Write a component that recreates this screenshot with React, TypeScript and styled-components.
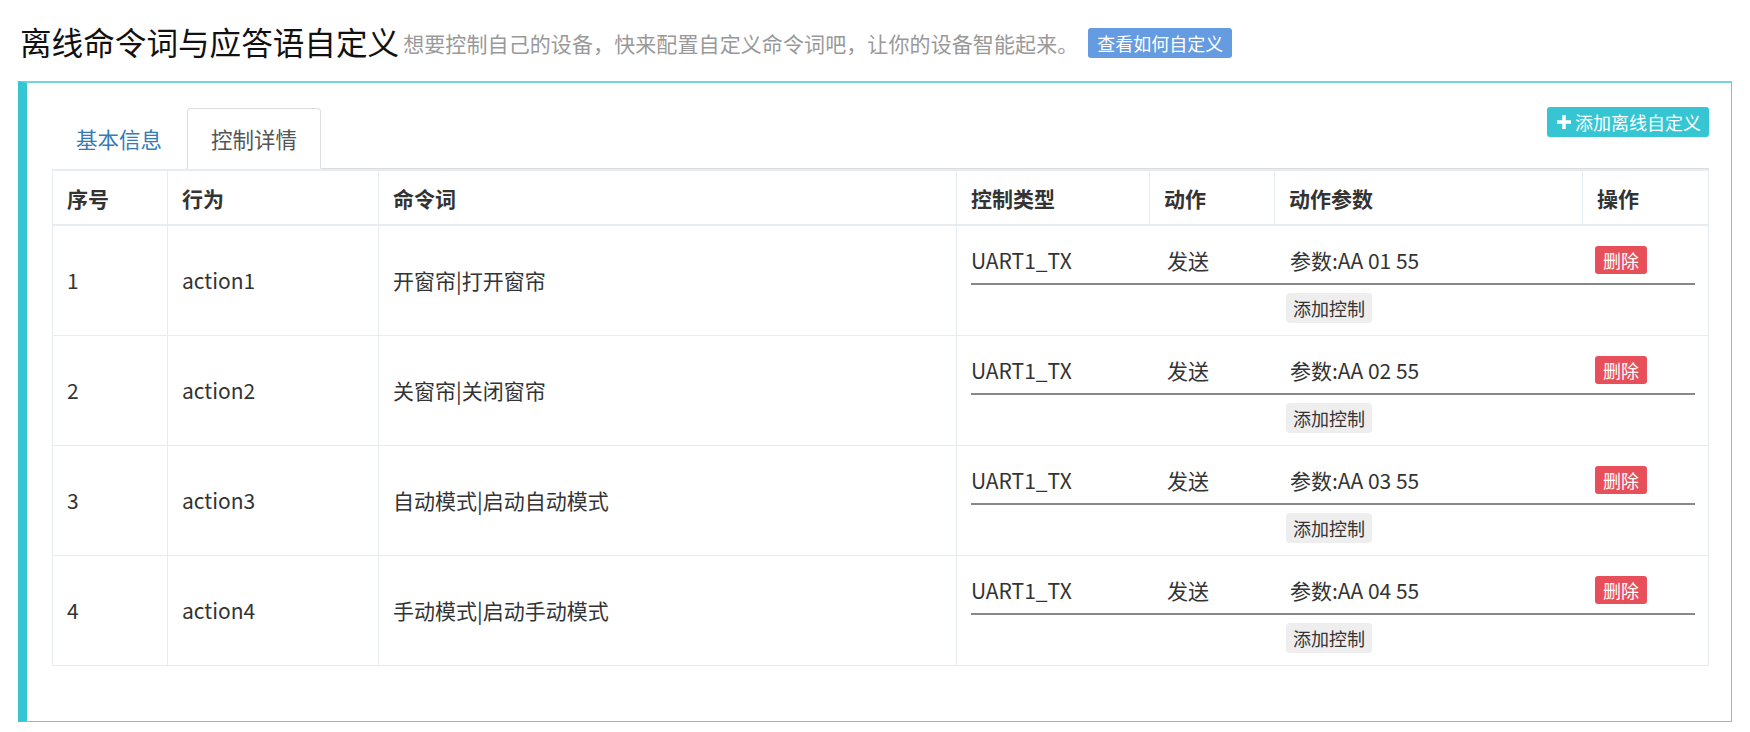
import React from 'react'
import styled, { createGlobalStyle } from 'styled-components'

const GlobalStyle = createGlobalStyle`
  html, body {
    margin: 0;
    padding: 0;
    background: #fff;
  }
  body {
    font-family: "Noto Sans CJK SC", "Noto Sans", sans-serif;
    color: #333;
  }
`

const ROWS = [
  { id: 1, action: 'action1', words: '开窗帘|打开窗帘', param: 'AA 01 55' },
  { id: 2, action: 'action2', words: '关窗帘|关闭窗帘', param: 'AA 02 55' },
  { id: 3, action: 'action3', words: '自动模式|启动自动模式', param: 'AA 03 55' },
  { id: 4, action: 'action4', words: '手动模式|启动手动模式', param: 'AA 04 55' },
]

const COLUMNS = [
  { title: '序号', width: 115 },
  { title: '行为', width: 211 },
  { title: '命令词', width: 578 },
  { title: '控制类型', width: 193 },
  { title: '动作', width: 125 },
  { title: '动作参数', width: 308 },
  { title: '操作', width: 126 },
]

const App = () => {
  return (
    <>
      <GlobalStyle />
      <Page>
        <TitleRow>
          <Title>离线命令词与应答语自定义</Title>
          <SubTitle>想要控制自己的设备，快来配置自定义命令词吧，让你的设备智能起来。</SubTitle>
          <HelpButton>查看如何自定义</HelpButton>
        </TitleRow>
        <Panel>
          <TabBar>
            <Tab>基本信息</Tab>
            <Tab active>控制详情</Tab>
            <AddButton>
              <PlusIcon viewBox="0 0 12 12">
                <path d="M4.5 0h3v4.5H12v3H7.5V12h-3V7.5H0v-3h4.5z" fill="#fff" />
              </PlusIcon>
              添加离线自定义
            </AddButton>
          </TabBar>
          <Table>
            <colgroup>
              {COLUMNS.map((c) => (
                <col key={c.title} style={{ width: c.width }} />
              ))}
            </colgroup>
            <thead>
              <tr>
                {COLUMNS.map((c) => (
                  <Th key={c.title}>{c.title}</Th>
                ))}
              </tr>
            </thead>
            <tbody>
              {ROWS.map((row) => (
                <tr key={row.id}>
                  <Td>{row.id}</Td>
                  <Td>{row.action}</Td>
                  <Td>{row.words}</Td>
                  <ControlCell colSpan={4}>
                    <ControlLine>
                      <span>UART1_TX</span>
                      <span>发送</span>
                      <span>参数:{row.param}</span>
                      <DeleteButton>删除</DeleteButton>
                    </ControlLine>
                    <AddControlRow>
                      <AddControlButton>添加控制</AddControlButton>
                    </AddControlRow>
                  </ControlCell>
                </tr>
              ))}
            </tbody>
          </Table>
        </Panel>
      </Page>
    </>
  )
}

export default App

const Page = styled.div`
  padding: 19px 18px 12px 18px;
`

const TitleRow = styled.div`
  display: flex;
  align-items: center;
  height: 44px;
  padding-left: 2px;
  margin-bottom: 18px;
`

const Title = styled.h1`
  margin: 0;
  font-size: 31.6px;
  font-weight: 400;
  color: #111;
`

const SubTitle = styled.span`
  margin-left: 4px;
  margin-top: 4px;
  font-size: 21px;
  color: #999;
  letter-spacing: 0.1px;
`

const HelpButton = styled.button`
  margin-left: 10px;
  margin-top: 4px;
  height: 30px;
  padding: 0 9px;
  border: none;
  border-radius: 3px;
  background: #659be0;
  color: #fff;
  font-family: inherit;
  font-size: 18px;
  line-height: 30px;
`

const Panel = styled.div`
  border: 1px solid #5dd0da;
  border-top: 2px solid #6fd5de;
  border-left: 9px solid #36c6d3;
  padding: 24px 22px 55px 25px;
`

const TabBar = styled.div`
  display: flex;
  align-items: flex-end;
  height: 61px;
  border-bottom: 1px solid #ddd;
`

const Tab = styled.div<{ active?: boolean }>`
  height: 61px;
  box-sizing: border-box;
  padding: 0 23px;
  margin-bottom: -1px;
  display: flex;
  align-items: center;
  font-size: 21.5px;
  color: ${({ active }) => (active ? '#555' : '#337ab7')};
  background: #fff;
  border: 1px solid ${({ active }) => (active ? '#ddd' : 'transparent')};
  border-bottom-color: ${({ active }) => (active ? '#fff' : 'transparent')};
  border-radius: 4px 4px 0 0;
  margin-right: 1px;
`

const AddButton = styled.button`
  margin-left: auto;
  align-self: flex-start;
  display: flex;
  align-items: center;
  gap: 4px;
  height: 30px;
  padding: 0 8px 0 10px;
  border: none;
  border-radius: 3px;
  background: #36c6d3;
  color: #fff;
  font-family: inherit;
  font-size: 18px;
`

const PlusIcon = styled.svg`
  width: 14px;
  height: 14px;
`

const Table = styled.table`
  width: 100%;
  table-layout: fixed;
  border-collapse: collapse;
  border: 1px solid #e7ecf1;
  border-top: none;
`

const Th = styled.th`
  height: 53px;
  padding: 0 14px;
  text-align: left;
  font-size: 21px;
  font-weight: 700;
  color: #333;
  border: 1px solid #e7ecf1;
  border-top: 2px solid #e7ecf1;
  border-bottom: 2px solid #e7ecf1;
`

const Td = styled.td`
  height: 110px;
  box-sizing: border-box;
  padding: 0 14px;
  font-size: 21px;
  color: #333;
  border: 1px solid #e7ecf1;
  vertical-align: middle;
`

const ControlCell = styled(Td)`
  padding: 0 13px 0 14px;
`

const ControlLine = styled.div`
  display: grid;
  grid-template-columns: 196px 123px 305px 1fr;
  align-items: center;
  height: 45px;
  border-bottom: 2px solid #888;
`

const DeleteButton = styled.button`
  justify-self: start;
  height: 28px;
  padding: 0 8px;
  border: none;
  border-radius: 3px;
  background: #e7505a;
  color: #fff;
  font-family: inherit;
  font-size: 18px;
  line-height: 28px;
`

const AddControlRow = styled.div`
  display: flex;
  justify-content: center;
  padding-top: 8px;
  padding-right: 8px;
`

const AddControlButton = styled.button`
  height: 30px;
  padding: 0 7px;
  border: none;
  border-radius: 4px;
  background: #eee;
  color: #333;
  font-family: inherit;
  font-size: 18px;
  line-height: 30px;
`
